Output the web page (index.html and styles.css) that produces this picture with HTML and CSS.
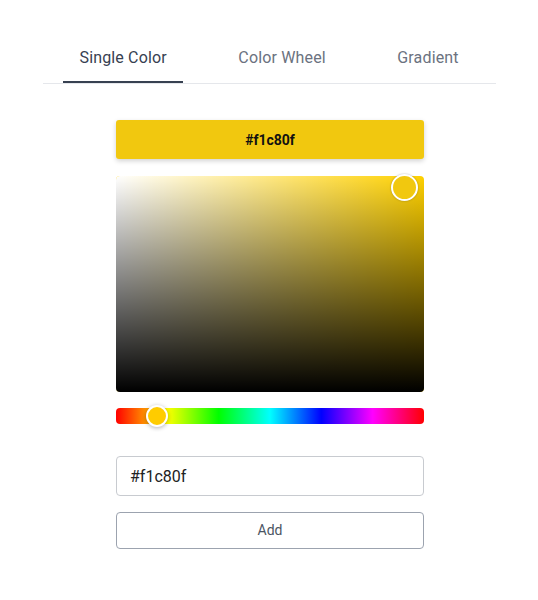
FILE: index.html
```html
<!DOCTYPE html>
<html>
<head>
<meta charset="utf-8">
<link rel="stylesheet" href="styles.css">
</head>
<body>
<div class="wrap">
  <div class="tabs">
    <div class="tab active">Single Color</div>
    <div class="tab">Color Wheel</div>
    <div class="tab">Gradient</div>
  </div>
  <div class="picker">
    <div class="preview">#f1c80f</div>
    <div class="sat">
      <div class="sat-white"></div>
      <div class="sat-black"></div>
      <div class="sat-handle"></div>
    </div>
    <div class="hue">
      <div class="hue-handle"></div>
    </div>
    <input class="hex" type="text" value="#f1c80f">
    <button class="add">Add</button>
  </div>
</div>
</body>
</html>
```
FILE: styles.css
```css
* { box-sizing: border-box; }
html, body { margin: 0; padding: 0; background: #fff; }
body { font-family: Roboto, "Noto Sans", sans-serif; }
.wrap { width: 453px; margin: 0 0 0 43px; padding-top: 46px; }
.tabs {
  display: flex;
  gap: 38.5px;
  padding-left: 20px;
  border-bottom: 1px solid #e5e7eb;
}
.tab {
  padding: 0 16.5px;
  height: 37px;
  line-height: 24px;
  font-size: 16px;
  letter-spacing: 0.15px;
  color: #6b7280;
  border-bottom: 2px solid transparent;
  white-space: nowrap;
}
.tab.active { color: #374151; border-bottom-color: #374151; }
.picker {
  width: 308px;
  margin: 36px 0 0 73px;
  display: flex;
  flex-direction: column;
}
.preview {
  height: 39px;
  background: #f1c80f;
  border-radius: 3px;
  box-shadow: 0 2px 5px rgba(0,0,0,0.18);
  display: flex;
  align-items: center;
  justify-content: center;
  font-weight: 700;
  font-size: 14px;
  color: #111;
}
.sat {
  position: relative;
  margin-top: 17px;
  height: 216px;
  border-radius: 4px;
  background: #ffd100;
}
.sat-white, .sat-black { position: absolute; inset: 0; border-radius: 4px; }
.sat-white { background: linear-gradient(to right, #fff, rgba(255,255,255,0)); }
.sat-black { background: linear-gradient(to bottom, rgba(0,0,0,0), #000); }
.sat-handle {
  position: absolute;
  left: 275px;
  top: -2px;
  width: 27px;
  height: 27px;
  border-radius: 50%;
  border: 2px solid #fff;
  background: #f1c80f;
  box-shadow: 0 0 2px rgba(0,0,0,0.3);
}
.hue {
  position: relative;
  margin-top: 16px;
  height: 16px;
  border-radius: 4px;
  background: linear-gradient(to right, #f00 0%, #ff0 16.66%, #0f0 33.33%, #0ff 50%, #00f 66.66%, #f0f 83.33%, #f00 100%);
}
.hue-handle {
  position: absolute;
  left: 30px;
  top: -3px;
  width: 22px;
  height: 22px;
  border-radius: 50%;
  border: 2px solid #fff;
  background: #ffcc00;
  box-shadow: 0 1px 4px rgba(0,0,0,0.3);
}
.hex {
  margin-top: 32px;
  height: 40px;
  border: 1px solid #c8cbd0;
  border-radius: 4px;
  padding: 0 13px;
  font-family: Roboto, "Noto Sans", sans-serif;
  font-size: 16px;
  color: #222;
  outline: none;
}
.add {
  margin-top: 16px;
  height: 37px;
  padding: 0 0 2px;
  border: 1px solid #9ca3af;
  border-radius: 4px;
  background: #fff;
  font-family: Roboto, "Noto Sans", sans-serif;
  font-size: 14px;
  color: #4b5563;
}
```
